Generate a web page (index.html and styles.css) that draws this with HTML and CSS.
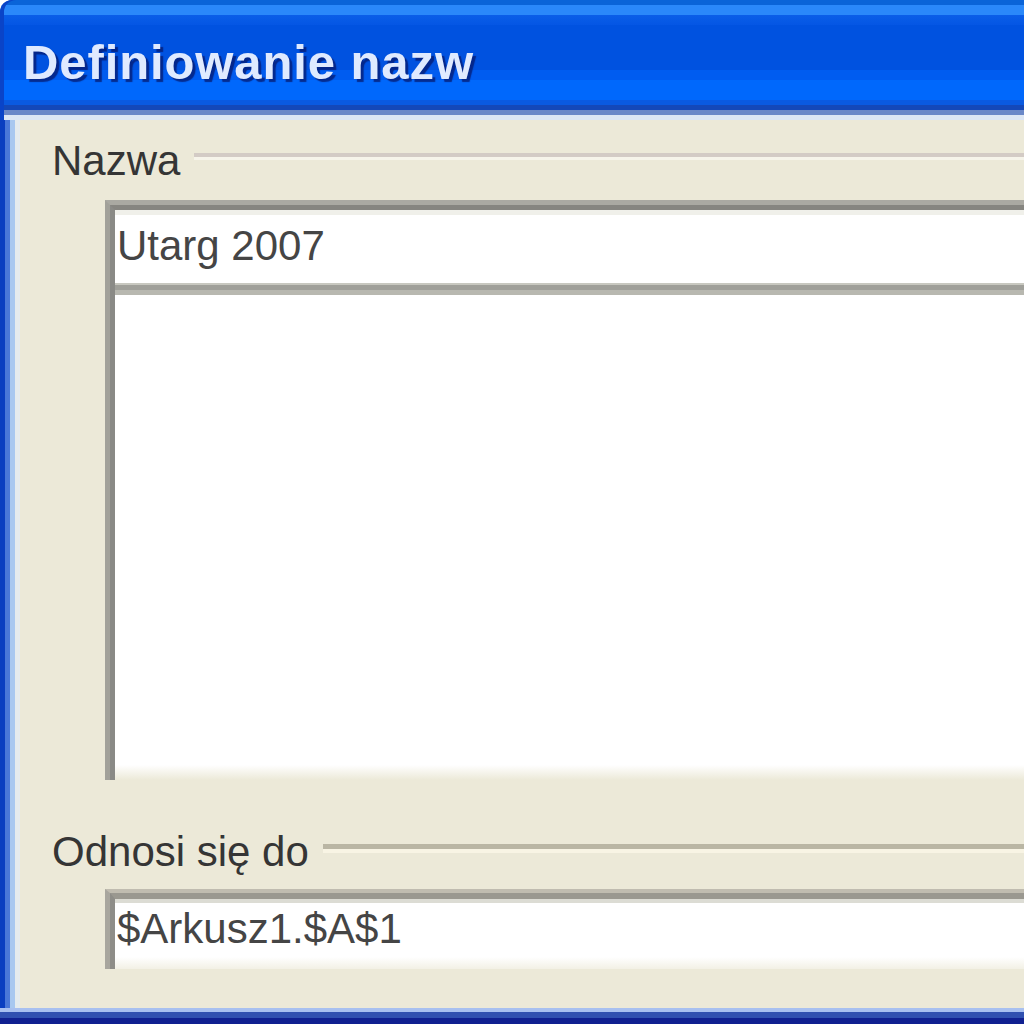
FILE: index.html
```html
<!DOCTYPE html>
<html lang="pl">
<head>
<meta charset="utf-8">
<title>Definiowanie nazw</title>
<link rel="stylesheet" href="styles.css">
</head>
<body>
<div class="window">
  <div class="titlebar"><span class="title">Definiowanie nazw</span></div>
  <div class="body">
    <div class="frame-left"></div>
    <div class="client">
      <div class="group-head">
        <span class="group-label">Nazwa</span>
        <span class="group-line line-a"></span>
      </div>
      <div class="namebox">
        <div class="namebox-inner">
          <div class="edit-row"><span class="edit-text">Utarg 2007</span></div>
          <div class="sep"></div>
          <div class="list"></div>
        </div>
      </div>
      <div class="group-head head-b">
        <span class="group-label">Odnosi się do</span>
        <span class="group-line line-b"></span>
      </div>
      <div class="refbox">
        <div class="refbox-inner"><span class="edit-text">$Arkusz1.$A$1</span></div>
      </div>
    </div>
  </div>
  <div class="frame-bottom"></div>
</div>
</body>
</html>
```
FILE: styles.css
```css
html, body {
  margin: 0;
  padding: 0;
  background: #ffffff;
}
.window {
  width: 1024px;
  height: 1024px;
  display: flex;
  flex-direction: column;
  overflow: hidden;
  font-family: "Liberation Sans", Arial, sans-serif;
}
.titlebar {
  height: 120px;
  flex: none;
  box-sizing: border-box;
  padding: 34px 0 0 23px;
  border-top-left-radius: 12px;
  background: linear-gradient(to bottom,
    #0a64d8 0px, #0a64d8 5px,
    #2a88fa 5px, #2a88fa 15px,
    #0a5ee8 15px, #0456e4 25px,
    #0052e0 25px, #0052e0 70px,
    #005cf0 70px, #005cf0 80px,
    #0068fc 80px, #0068fc 100px,
    #0a5ae0 100px, #0a5ae0 105px,
    #1448b8 105px, #1448b8 110px,
    #6a88c8 110px, #6a88c8 115px,
    #dce6f4 115px, #dce6f4 120px);
  box-shadow: inset 4px 0 0 #0a44c8;
}
.title {
  display: block;
  font-weight: 700;
  font-size: 49px;
  line-height: 56px;
  letter-spacing: 0.9px;
  color: #dfeaff;
  text-shadow: 3px 3px 1px rgba(6, 24, 110, 0.75);
}
.body {
  flex: 1;
  display: flex;
  min-height: 0;
}
.frame-left {
  width: 15px;
  flex: none;
  background: linear-gradient(to right,
    #0a3fc0 0px, #0a3fc0 5px,
    #4a78d8 5px, #4a78d8 10px,
    #a8c8f0 10px, #a8c8f0 15px);
}
.client {
  flex: 1;
  min-width: 0;
  background: #ece9d8;
  box-shadow: inset 5px 0 0 #e4ebee;
  padding: 17px 0 0 37px;
  display: flex;
  flex-direction: column;
}
.group-head {
  display: flex;
  align-items: flex-start;
  gap: 14px;
  height: 48px;
}
.group-label {
  font-size: 42px;
  line-height: 48px;
  color: #353535;
  white-space: nowrap;
}
.group-line {
  flex: 1;
  box-sizing: border-box;
}
.line-a {
  margin-top: 16px;
  border-top: 4px solid #d3cbc5;
  border-bottom: 3px solid #f6f4ea;
}
.line-b {
  margin-top: 16px;
  border-top: 5px solid #bab6a4;
  border-bottom: 4px solid #f8f4e4;
}
.namebox {
  margin: 15px 0 0 53px;
  width: 1000px;
  border-top: 5px solid #aaa9a2;
  border-left: 5px solid #a2a19a;
}
.namebox-inner {
  border-top: 5px solid #868580;
  border-left: 5px solid #8a8a86;
}
.edit-row {
  height: 73px;
  box-sizing: border-box;
  padding: 12px 0 0 2px;
  background: #ffffff;
  box-shadow: inset 0 5px 0 #f0f0ea;
}
.edit-text {
  display: block;
  font-size: 42px;
  line-height: 48px;
  color: #454545;
  white-space: nowrap;
}
.sep {
  height: 12px;
  background: linear-gradient(to bottom,
    #c8c8c0 0px, #c8c8c0 2px,
    #a0a09a 2px, #a0a09a 7px,
    #b8b8b0 7px, #b8b8b0 12px);
}
.list {
  height: 485px;
  background: linear-gradient(to bottom, #ffffff 0, #ffffff 470px, #ece9d8 485px);
}
.head-b {
  margin-top: 48px;
}
.refbox {
  margin: 13px 0 0 53px;
  width: 1000px;
  border-top: 4px solid #c0bcb0;
  border-left: 5px solid #a8a69e;
}
.refbox-inner {
  height: 76px;
  box-sizing: border-box;
  padding: 6px 0 0 2px;
  border-top: 6px solid #9a9890;
  border-left: 5px solid #8e8d88;
  background: linear-gradient(to bottom, #ffffff 0, #ffffff 58px, #ece9d8 76px);
  box-shadow: inset 0 4px 0 #dcdcd4;
}
.frame-bottom {
  height: 16px;
  flex: none;
  background: linear-gradient(to bottom,
    #a8c0f0 0px, #a8c0f0 4px,
    #3050b0 4px, #3050b0 10px,
    #102090 10px, #102090 16px);
}
```
